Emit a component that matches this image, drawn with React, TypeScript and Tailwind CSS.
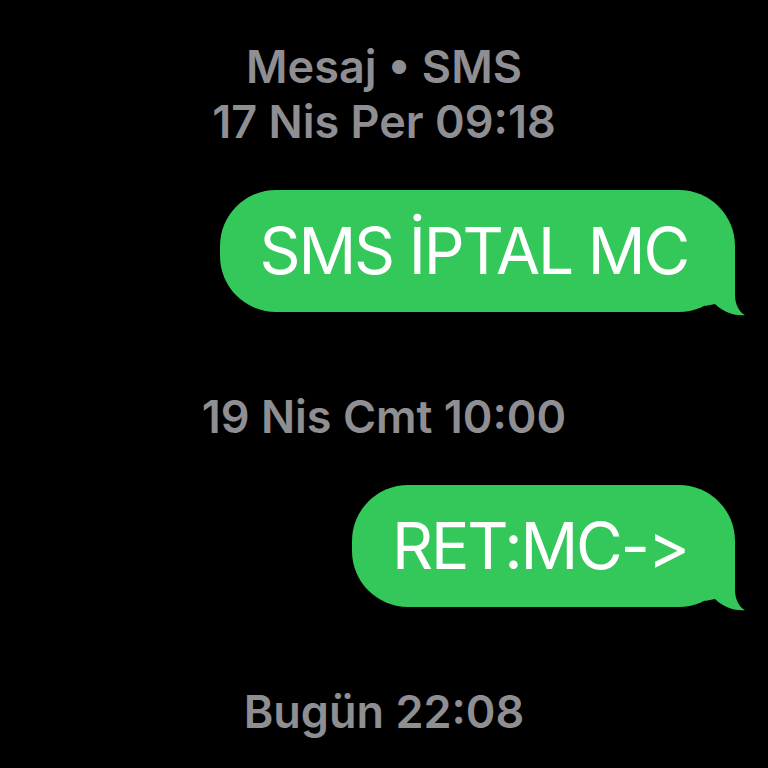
const font = { fontFamily: 'Inter, "Noto Sans", sans-serif' };

function Stamp({ lines }: { lines: string[] }) {
  return (
    <div className="flex flex-col items-center text-[45px] leading-[55px] font-semibold text-[#8e8e93] tracking-[0px]">
      {lines.map((l) => (
        <div key={l}>{l}</div>
      ))}
    </div>
  );
}

function Bubble({ text }: { text: string }) {
  return (
    <div className="self-end mr-[33px] relative">
      <div className="relative z-10 bg-[#34c759] rounded-[56px] pl-[40px] pr-[47px] py-[22px] text-white text-[64px] leading-[78px] font-normal tracking-[-2.2px] whitespace-nowrap">
        {text}
      </div>
      {/* tail */}
      <svg
        className="absolute right-[-10px] bottom-[-4px] z-20"
        width="40"
        height="64"
        viewBox="0 0 40 64"
      >
        <path
          d="M30 0 V43 C30 52 34 60 40 63 C33 64 20 62 10 52 L0 54 L0 0 Z"
          fill="#34c759"
        />
      </svg>
    </div>
  );
}

export default function App() {
  return (
    <div className="w-[768px] h-[768px] bg-black overflow-hidden flex flex-col" style={font}>
      <div className="pt-[39px]">
        <Stamp lines={['Mesaj • SMS', '17 Nis Per 09:18']} />
      </div>
      <div className="mt-[41px] flex flex-col">
        <Bubble text="SMS İPTAL MC" />
      </div>
      <div className="mt-[77px]">
        <Stamp lines={['19 Nis Cmt 10:00']} />
      </div>
      <div className="mt-[41px] flex flex-col">
        <Bubble text="RET:MC->" />
      </div>
      <div className="mt-[77px]">
        <Stamp lines={['Bugün 22:08']} />
      </div>
    </div>
  );
}
